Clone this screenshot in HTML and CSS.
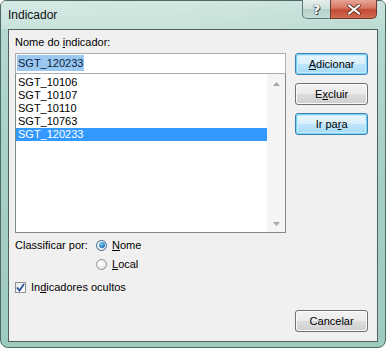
FILE: index.html
```html
<!DOCTYPE html>
<html lang="pt">
<head>
<meta charset="utf-8">
<title>Indicador</title>
<link rel="stylesheet" href="styles.css">
</head>
<body>
<div class="window">
  <div class="titlebar">
    <span class="title">Indicador</span>
    <div class="caption">
      <div class="cap help"><span>?</span></div>
      <div class="cap close">
        <svg width="14" height="11" viewBox="0 0 14 11"><path d="M2 1.5 L12 9.5 M12 1.5 L2 9.5" stroke="#5a2a22" stroke-width="3.6" stroke-linecap="round"/><path d="M2 1.5 L12 9.5 M12 1.5 L2 9.5" stroke="#ffffff" stroke-width="2.2" stroke-linecap="round"/></svg>
      </div>
    </div>
  </div>
  <div class="client">
    <div class="leftcol">
      <div class="label">Nome do <u>i</u>ndicador:</div>
      <div class="textbox"><span class="sel">SGT_120233</span></div>
      <div class="listbox">
        <div class="items">
          <div class="item">SGT_10106</div>
          <div class="item">SGT_10107</div>
          <div class="item">SGT_10110</div>
          <div class="item">SGT_10763</div>
          <div class="item selected">SGT_120233</div>
        </div>
        <div class="scrollbar">
          <svg class="arrow" width="7" height="4" viewBox="0 0 7 4"><path d="M0 4 L3.5 0 L7 4 Z" fill="#a8a8a8"/></svg>
          <svg class="arrow" width="7" height="4" viewBox="0 0 7 4"><path d="M0 0 L3.5 4 L7 0 Z" fill="#a8a8a8"/></svg>
        </div>
      </div>
      <div class="sortrow">
        <span class="sortlabel">Classificar por:</span>
        <div class="radios">
          <div class="opt"><span class="radio checked"><span class="dot"></span></span><span><u>N</u>ome</span></div>
          <div class="opt"><span class="radio"></span><span><u>L</u>ocal</span></div>
        </div>
      </div>
      <div class="opt check-opt"><span class="checkbox">
        <svg width="9" height="9" viewBox="0 0 9 9"><path d="M1 4.5 L3.5 7.5 L8 1" stroke="#2a4f9a" stroke-width="1.8" fill="none"/></svg>
      </span><span>In<u>d</u>icadores ocultos</span></div>
    </div>
    <div class="rightcol">
      <div class="btn focus"><u>A</u>dicionar</div>
      <div class="btn">E<u>x</u>cluir</div>
      <div class="btn focus">Ir pa<u>r</u>a</div>
      <div class="spacer"></div>
      <div class="btn">Cancelar</div>
    </div>
  </div>
</div>
</body>
</html>
```
FILE: styles.css
```css
html, body {
  margin: 0;
  padding: 0;
  background: #ffffff;
}
body {
  width: 386px;
  height: 349px;
  overflow: hidden;
  font-family: "Liberation Sans", Arial, sans-serif;
  font-size: 11px;
  color: #000;
}
u { text-decoration: underline; text-underline-offset: 1px; }
.window {
  width: 386px;
  height: 348px;
  box-sizing: border-box;
  border-radius: 6px 6px 8px 8px;
  border: 1px solid #4d6a64;
  background: linear-gradient(180deg, #c9e3dc 0%, #b5d9d0 8%, #a6d0c5 50%, #9ecbbf 100%);
  display: flex;
  flex-direction: column;
}
.titlebar {
  height: 28px;
  display: flex;
  align-items: flex-start;
  justify-content: space-between;
  padding-left: 7px;
  background: linear-gradient(90deg, rgba(255,255,255,0.25), rgba(220,235,230,0.55) 40%, rgba(200,225,218,0.3) 100%);
}
.title {
  margin-top: 7px;
  font-size: 12px;
  color: #111;
}
.caption {
  display: flex;
  margin-right: 8px;
  margin-top: -1px;
}
.cap {
  height: 19px;
  display: flex;
  align-items: center;
  justify-content: center;
  border: 1px solid #5d7a76;
  border-top: none;
  box-sizing: border-box;
}
.help {
  width: 28px;
  border-radius: 0 0 0 5px;
  background: linear-gradient(180deg, #e4efec 0%, #cfe1dc 50%, #b6cfc9 51%, #c4dcd6 100%);
  border-right: none;
}
.help span {
  font-family: "DejaVu Sans", sans-serif;
  font-weight: bold;
  font-size: 13px;
  color: #ffffff;
  text-shadow: 0 0 1px #3c4e4a, 0 0 1px #3c4e4a, 1px 1px 0 #3c4e4a;
}
.close {
  width: 47px;
  border-radius: 0 0 5px 0;
  background: linear-gradient(180deg, #e8a595 0%, #d57562 45%, #c34a33 55%, #d06c50 100%);
  border-color: #6f3a30;
}
.client {
  flex: 1;
  margin: 0 7px 5px 7px;
  border: 1px solid #50605d;
  background: #f0f0f0;
  display: flex;
  padding: 0 9px 9px 6px;
  box-sizing: border-box;
}
.leftcol {
  width: 272px;
  display: flex;
  flex-direction: column;
}
.label {
  margin-top: 5px;
  height: 15px;
  line-height: 15px;
  margin-bottom: 3px;
}
.textbox {
  height: 21px;
  box-sizing: border-box;
  border: 1px solid #abadb3;
  background: #fff;
  padding: 1px 0 0 1px;
  line-height: 16px;
}
.sel {
  display: inline-block;
  background: #9bc8ee;
  color: #0a1d47;
  padding: 0 1px;
  height: 16px;
}
.listbox {
  height: 159px;
  box-sizing: border-box;
  border: 1px solid #828790;
  border-top: none;
  background: #fff;
  display: flex;
}
.items {
  flex: 1;
  padding-top: 2px;
}
.item {
  height: 13px;
  line-height: 13px;
  padding-left: 2px;
}
.item.selected {
  background: #3399ff;
  color: #fff;
}
.scrollbar {
  width: 18px;
  background: #f4f4f4;
  display: flex;
  flex-direction: column;
  justify-content: space-between;
  align-items: center;
  padding: 8px 0 6px 0;
}
.sortrow {
  display: flex;
  margin-top: 4px;
}
.sortlabel {
  width: 81px;
  height: 16px;
  line-height: 16px;
}
.radios {
  display: flex;
  flex-direction: column;
  gap: 3px;
}
.opt {
  display: flex;
  align-items: center;
  height: 16px;
  line-height: 16px;
}
.radio {
  width: 11px;
  height: 11px;
  box-sizing: border-box;
  border-radius: 50%;
  border: 1px solid #8e8f8f;
  background: radial-gradient(circle at 40% 35%, #ffffff 0%, #eeeeee 50%, #d4d4d4 100%);
  margin-right: 5px;
  display: flex;
  align-items: center;
  justify-content: center;
}
.radio.checked {
  border-color: #3a6a95;
}
.dot {
  width: 6px;
  height: 6px;
  border-radius: 50%;
  background: radial-gradient(circle at 40% 35%, #8fd1f5 0%, #2a86c8 55%, #0d4f8b 100%);
}
.check-opt {
  margin-top: 7px;
}
.checkbox {
  width: 11px;
  height: 11px;
  box-sizing: border-box;
  border: 1px solid #8e8f8f;
  background: linear-gradient(135deg, #e6e6e6, #ffffff);
  margin-right: 5px;
  display: flex;
  align-items: center;
  justify-content: center;
}
.rightcol {
  margin-left: 9px;
  width: 73px;
  display: flex;
  flex-direction: column;
  padding-top: 23px;
}
.btn {
  height: 22px;
  box-sizing: border-box;
  border: 1px solid #707070;
  border-radius: 3px;
  background: linear-gradient(180deg, #f2f2f2 0%, #ebebeb 49%, #dddddd 50%, #cfcfcf 100%);
  display: flex;
  align-items: center;
  justify-content: center;
  margin-bottom: 8px;
  box-shadow: inset 0 0 0 1px #fbfbfb;
}
.btn.focus {
  border-color: #3c7fb1;
  box-shadow: inset 0 0 0 1px #7bd4f6, inset 0 0 0 2px #c3ecfb;
  background: linear-gradient(180deg, #eaf6fd 0%, #d9f0fc 49%, #bee6fd 50%, #a7d9f5 100%);
}
.btn:last-child { margin-bottom: 0; }
.spacer { flex: 1; }
```
